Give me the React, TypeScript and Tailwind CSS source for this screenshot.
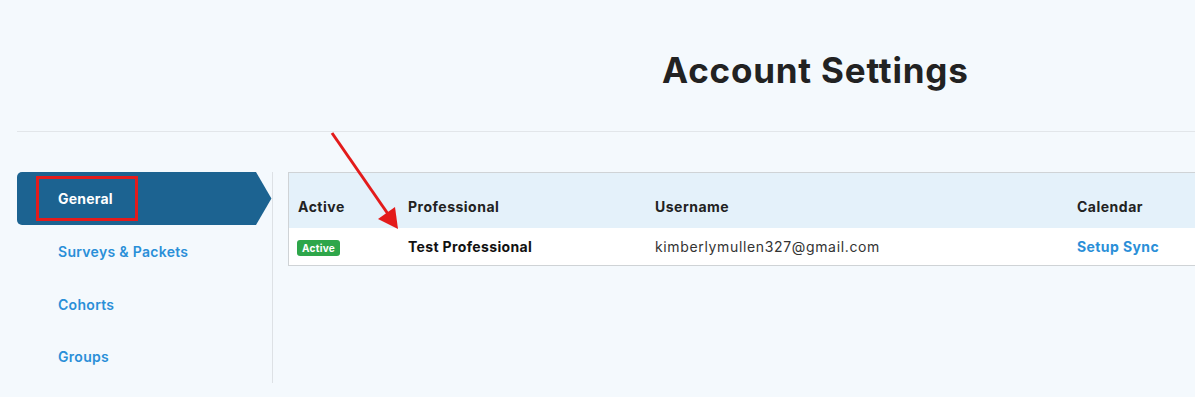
import React from "react";

const font = { fontFamily: "Inter, 'Open Sans', 'Liberation Sans', sans-serif" };

export default function App() {
  return (
    <div className="w-[1195px] h-[397px] overflow-hidden bg-[#f4f9fd] relative" style={font}>
      {/* Title */}
      <div className="h-[131px] flex items-center pl-[662px] pt-[10px]">
        <h1 className="text-[35px] font-bold text-[#222] tracking-[0.8px] leading-none">Account Settings</h1>
      </div>
      <div className="ml-[17px] h-px bg-[#e2e6ea]" />

      <div className="flex items-start pt-[40px] pl-[17px]">
        {/* Sidebar */}
        <div className="w-[256px] shrink-0 border-r border-[#dde1e5] h-[211px] flex flex-col">
          <div className="relative h-[53px] flex">
            <div className="w-[239px] h-full bg-[#1c6391] rounded-l-[5px] flex items-center pl-[41px]">
              <span className="text-white font-bold text-[14px] tracking-[0.2px]">General</span>
            </div>
            <svg width="17" height="53" viewBox="0 0 17 53" className="block">
              <polygon points="0,0 1,0 16.5,26.5 1,53 0,53" fill="#1c6391" />
            </svg>
            <div className="absolute left-[19px] top-[4px] w-[102px] h-[45px] border-[3px] border-[#e31b1b]" />
          </div>
          {["Surveys & Packets", "Cohorts", "Groups"].map((t) => (
            <div key={t} className="h-[53px] flex items-center pl-[41px] text-[14px] font-semibold tracking-[0.3px] text-[#2a8fd8]">
              {t}
            </div>
          ))}
        </div>

        {/* Table */}
        <div className="ml-[15px] w-[1000px] shrink-0 border border-[#cfd3d6] bg-white">
          <div className="h-[55px] bg-[#e4f1fa] grid grid-cols-[119px_247px_422px_1fr] items-end pb-[11px] text-[14px] font-bold tracking-[0.5px] text-[#222]">
            <div className="pl-[9px]">Active</div>
            <div>Professional</div>
            <div>Username</div>
            <div>Calendar</div>
          </div>
          <div className="h-[37px] grid grid-cols-[119px_247px_422px_1fr] items-center text-[14px]">
            <div className="pl-[8px]">
              <span className="inline-flex items-center h-[16px] px-[5px] rounded-[3px] bg-[#2ea64a] text-white text-[10px] font-bold tracking-[0.3px] leading-none">Active</span>
            </div>
            <div className="font-bold text-[#111] tracking-[0.35px]">Test Professional</div>
            <div className="text-[#333] tracking-[0.65px]">kimberlymullen327@gmail.com</div>
            <div className="font-bold text-[#2a8fd8] tracking-[0.4px]">Setup Sync</div>
          </div>
        </div>
      </div>

      {/* Annotation arrow */}
      <svg className="absolute left-0 top-0 pointer-events-none" width="1195" height="397">
        <line x1="332" y1="133" x2="388" y2="214" stroke="#e31b1b" strokeWidth="3" />
        <polygon points="398,229 378,219 395,207" fill="#e31b1b" />
      </svg>
    </div>
  );
}
